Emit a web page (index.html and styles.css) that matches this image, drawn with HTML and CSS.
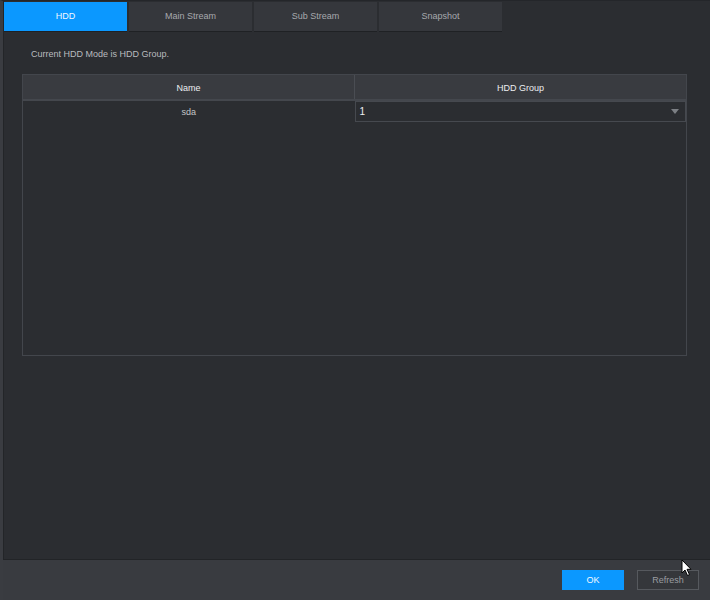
FILE: index.html
```html
<!DOCTYPE html>
<html>
<head>
<meta charset="utf-8">
<link rel="stylesheet" href="styles.css">
</head>
<body>
<div class="app">
  <div class="main">
    <div class="tabs">
      <div class="tab active">HDD</div>
      <div class="tab">Main Stream</div>
      <div class="tab">Sub Stream</div>
      <div class="tab">Snapshot</div>
    </div>
    <div class="content">
      <p class="mode">Current HDD Mode is HDD Group.</p>
      <div class="table">
        <div class="thead">
          <div class="th">Name</div>
          <div class="th">HDD Group</div>
        </div>
        <div class="row">
          <div class="td">sda</div>
          <div class="td sel-cell">
            <div class="select"><span>1</span><span class="caret"></span></div>
          </div>
        </div>
      </div>
    </div>
  </div>
  <div class="footer">
    <button class="btn primary">OK</button>
    <button class="btn ghost">Refresh</button>
  </div>
  <svg class="cursor" width="12" height="18" viewBox="0 0 12 18"><path d="M1 1 L1 14 L4 11 L6.5 16.5 L8.5 15.6 L6 10.3 L10 10.3 Z" fill="#fff" stroke="#000" stroke-width="1"/></svg>
</div>
</body>
</html>
```

FILE: styles.css
```css
html, body {
  margin: 0;
  padding: 0;
  background: #2b2d31;
}
body {
  font-family: "Liberation Sans", Arial, sans-serif;
  font-size: 9px;
  color: #b4b6ba;
}
.app {
  position: relative;
  width: 710px;
  height: 600px;
  display: flex;
  flex-direction: column;
  box-sizing: border-box;
  border-left: 3px solid #3a3c41;
  border-top: 1px solid #24262a;
}
.main {
  flex: 1;
  display: flex;
  flex-direction: column;
  border-left: 1px solid #232528;
}
.tabs {
  display: flex;
  gap: 2px;
  padding-top: 1px;
}
.tab {
  width: 123px;
  height: 30px;
  box-sizing: border-box;
  padding-bottom: 1px;
  background: #35373c;
  border-bottom: 1px solid #1f2124;
  color: #a7a9ad;
  display: flex;
  align-items: center;
  justify-content: center;
}
.tab.active {
  background: #0b98ff;
  color: #f2f8ff;
}
.content {
  padding: 0 23px 0 18px;
}
.mode {
  margin: 16px 0 13px 9px;
  line-height: 13px;
  color: #b9bbbf;
}
.table {
  height: 281px;
  border: 1px solid #43464c;
  border-top: none;
  display: flex;
  flex-direction: column;
}
.thead {
  display: flex;
  background: #393b40;
  border-top: 1px solid #43464c;
  border-bottom: 2px solid #44474d;
  height: 24px;
}
.th {
  flex: 1;
  display: flex;
  align-items: center;
  justify-content: center;
  padding-top: 2px;
  color: #eceef0;
}
.th + .th {
  border-left: 1px solid #4a4d53;
}
.row {
  display: flex;
  height: 21px;
}
.td {
  flex: 1;
  display: flex;
  align-items: center;
  justify-content: center;
  color: #c3c5c8;
}
.sel-cell {
  align-items: stretch;
  justify-content: stretch;
}
.select {
  flex: 1;
  display: flex;
  align-items: center;
  justify-content: space-between;
  border: 1px solid #46494f;
  background: #2b2d31;
  padding: 0 6px 0 4px;
  color: #eef0f2;
  font-size: 10px;
}
.caret {
  width: 0;
  height: 0;
  border-left: 4px solid transparent;
  border-right: 4px solid transparent;
  border-top: 5px solid #7c7f84;
}
.footer {
  height: 41px;
  background: #393b40;
  border-top: 1px solid #222427;
  display: flex;
  justify-content: flex-end;
  align-items: flex-start;
  gap: 13px;
  padding: 10px 11px 0 0;
  box-sizing: border-box;
}
.btn {
  width: 62px;
  height: 20px;
  font-family: "Liberation Sans", Arial, sans-serif;
  font-size: 9px;
  padding: 0;
  border: 1px solid transparent;
  cursor: default;
}
.btn.primary {
  background: #0b98ff;
  color: #f2f8ff;
}
.btn.ghost {
  background: #35373b;
  border-color: #56595e;
  color: #9a9da1;
}
.cursor {
  position: absolute;
  left: 678px;
  top: 558px;
}
```
